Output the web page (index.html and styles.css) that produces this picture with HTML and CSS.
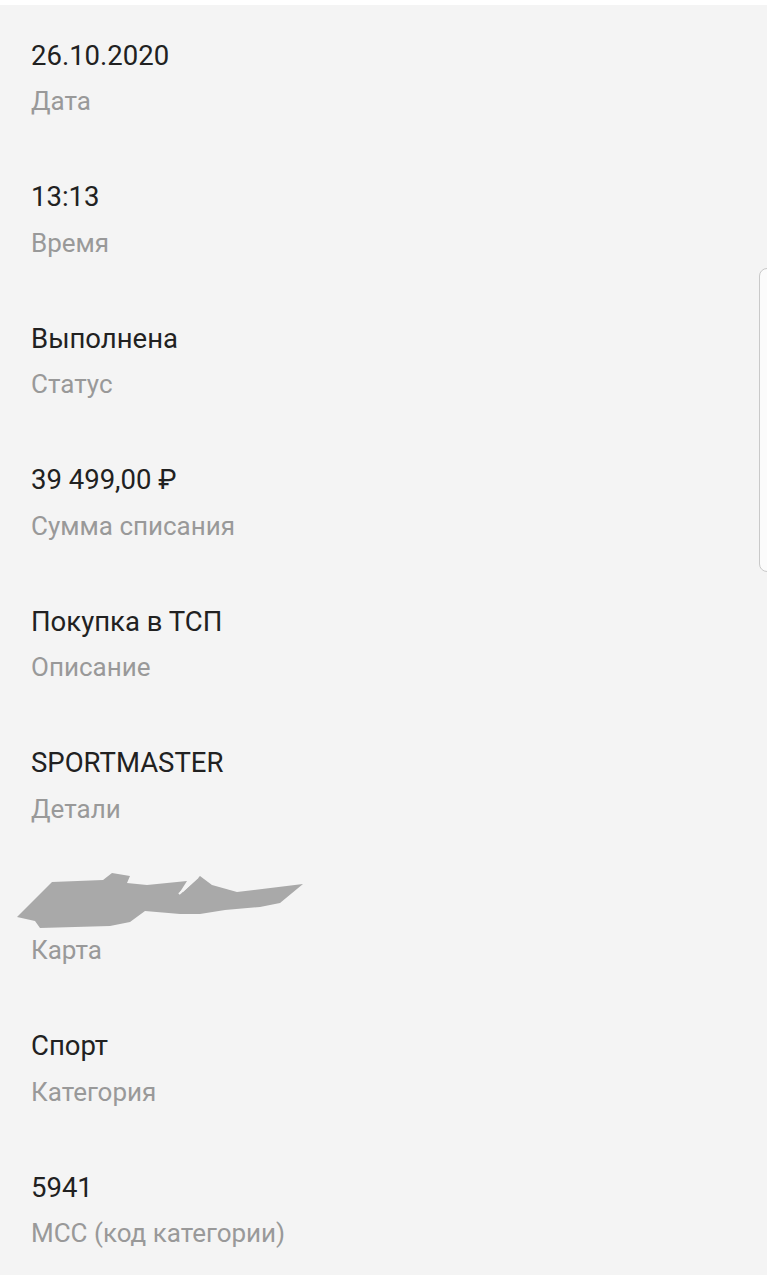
FILE: index.html
```html
<!DOCTYPE html>
<html lang="ru">
<head>
<meta charset="utf-8">
<link rel="stylesheet" href="styles.css">
</head>
<body>
<main class="sheet">
  <div class="row"><div class="value">26.10.2020</div><div class="label">Дата</div></div>
  <div class="row"><div class="value">13:13</div><div class="label">Время</div></div>
  <div class="row"><div class="value">Выполнена</div><div class="label">Статус</div></div>
  <div class="row"><div class="value">39 499,00 ₽</div><div class="label">Сумма списания</div></div>
  <div class="row"><div class="value">Покупка в ТСП</div><div class="label">Описание</div></div>
  <div class="row"><div class="value">SPORTMASTER</div><div class="label">Детали</div></div>
  <div class="row">
    <div class="value value-hidden">
      <svg class="blot" viewBox="0 0 290 60" width="290" height="60">
        <polygon fill="#a9a9a9" points="0,45 35,10 86,8 95,1 113,4 110,11 130,13 170,9 163,20 166,20 183,4 195,13 220,20 286,12 263,31 243,35 208,38 183,42 163,42 128,39 113,50 93,54 23,56 18,49"/>
        <line x1="162" y1="22" x2="181" y2="5" stroke="#f4f4f4" stroke-width="2.2"/>
      </svg>
    </div>
    <div class="label">Карта</div>
  </div>
  <div class="row"><div class="value">Спорт</div><div class="label">Категория</div></div>
  <div class="row"><div class="value">5941</div><div class="label">MCC (код категории)</div></div>
</main>
<div class="edge-tab"></div>
</body>
</html>
```

FILE: styles.css
```css
html, body {
  margin: 0;
  padding: 0;
  background: #ffffff;
}
body {
  font-family: Roboto, "Noto Sans", "Liberation Sans", sans-serif;
  width: 767px;
  height: 1280px;
  overflow: hidden;
  position: relative;
}
.sheet {
  margin-top: 5px;
  height: 1270px;
  background: #f4f4f4;
  box-sizing: border-box;
}
.row {
  height: 141.5px;
  box-sizing: border-box;
  padding: 32.6px 0 0 31px;
}
.value {
  font-size: 27.5px;
  line-height: 36px;
  color: #212121;
  height: 36px;
}
.value-hidden {
  display: flow-root;
}
.label {
  margin-top: 11.5px;
  font-size: 26px;
  line-height: 32px;
  color: #999999;
}
.blot {
  display: block;
  margin: -15px 0 0 -14px;
}
.edge-tab {
  position: absolute;
  left: 759px;
  top: 268px;
  width: 24px;
  height: 304px;
  box-sizing: border-box;
  border: 1.5px solid #c9c9c9;
  border-radius: 8px;
  background: #fbfbfb;
}
```
